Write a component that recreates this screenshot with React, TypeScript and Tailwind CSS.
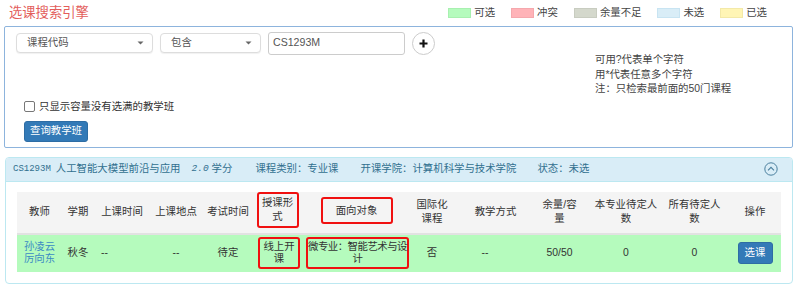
import React from "react";

const legend = [
  { label: "可选", bg: "bg-[#b5fbbd]", bd: "border-[#a8f0b0]" },
  { label: "冲突", bg: "bg-[#ffb3b8]", bd: "border-[#f5a8ad]" },
  { label: "余量不足", bg: "bg-[#d4d8cc]", bd: "border-[#c8ccc0]" },
  { label: "未选", bg: "bg-[#d9edf7]", bd: "border-[#c8e4f2]" },
  { label: "已选", bg: "bg-[#fff5b5]", bd: "border-[#f3e9a8]" },
];

function Caret() {
  return (
    <svg width="7" height="4" viewBox="0 0 7 4" className="shrink-0">
      <path d="M0.5 0.5 L6.5 0.5 L3.5 3.5 Z" fill="#666" />
    </svg>
  );
}

export default function App() {
  return (
    <div className="w-[797px] h-[288px] bg-white text-[#333] text-[10.4px] font-['Liberation_Sans','Noto_Sans_CJK_SC',sans-serif] overflow-hidden">
      {/* title row */}
      <div className="flex items-center justify-between h-[26px] pl-[9px] pr-[30px]">
        <div className="text-[13.3px] text-[#e35d5b] leading-[16px]">选课搜索引擎</div>
        <div className="flex items-center gap-[16px]">
          {legend.map((l) => (
            <div key={l.label} className="flex items-center">
              <span className={`w-[23px] h-[10px] border ${l.bg} ${l.bd}`} />
              <span className="ml-[3px] text-[#444] leading-[12px]">{l.label}</span>
            </div>
          ))}
        </div>
      </div>

      {/* search panel */}
      <div className="ml-[4px] mr-[4px] border border-[#8db4dd] rounded-[2px] pl-[11px] pr-[11px] pt-[5px] pb-[5px]">
        <div className="flex">
          <div className="flex-1 flex items-start">
            <div className="mt-[1px] w-[137px] h-[20px] border border-[#ddd] rounded-[4px] bg-white shadow-[0_1px_1px_rgba(0,0,0,0.06)] flex items-center justify-between pl-[10px] pr-[8px]">
              <span className="text-[#555] leading-[12px]">课程代码</span>
              <Caret />
            </div>
            <div className="ml-[7px] mt-[1px] w-[101px] h-[20px] border border-[#ddd] rounded-[4px] bg-white shadow-[0_1px_1px_rgba(0,0,0,0.06)] flex items-center justify-between pl-[10px] pr-[8px]">
              <span className="text-[#555] leading-[12px]">包含</span>
              <Caret />
            </div>
            <div className="ml-[7px] w-[137px] h-[23px] border border-[#ccc] rounded-[3px] bg-white flex items-center pl-[4px]">
              <span className="text-[#555] text-[10.6px] leading-[12px] -mt-[3px]">CS1293M</span>
            </div>
            <div className="ml-[7px] w-[23px] h-[23px] rounded-full border border-[#ccc] bg-white flex items-center justify-center">
              <svg width="9" height="9" viewBox="0 0 9 9">
                <path d="M4.5 0.5 V8.5 M0.5 4.5 H8.5" stroke="#111" strokeWidth="2.2" />
              </svg>
            </div>
          </div>
          <div className="w-[186px] pt-[21px] leading-[14.5px] text-[#444]">
            <div>可用?代表单个字符</div>
            <div>用*代表任意多个字符</div>
            <div>注：只检索最前面的50门课程</div>
          </div>
        </div>
        <div className="mt-[4px] h-[12px] flex items-center pl-[8px]">
          <span className="w-[11px] h-[11px] border border-[#777] rounded-[2px] bg-white" />
          <span className="ml-[4px] leading-[12px] text-[#333]">只显示容量没有选满的教学班</span>
        </div>
        <div className="mt-[8px] ml-[8px] w-[64px] h-[21px] bg-[#337ab7] border border-[#2e6da4] rounded-[3px] flex items-center justify-center text-white leading-[12px]">
          查询教学班
        </div>
      </div>

      {/* course panel */}
      <div className="mt-[9px] ml-[5px] mr-[4px] border border-[#bce8f1] rounded-[4px]">
        <div className="h-[24px] bg-[#d9edf7] border-b border-[#bce8f1] rounded-t-[3px] flex items-center pl-[7px] pr-[14px] text-[#31708f] leading-[12px]">
          <span className="font-['Liberation_Mono',monospace] text-[9px]">CS1293M</span>
          <span className="ml-[5px]">人工智能大模型前沿与应用</span>
          <span className="ml-[11px] italic font-['Liberation_Mono',monospace] text-[9.5px]">2.0</span>
          <span className="ml-[3px]">学分</span>
          <span className="ml-[23px]">课程类别：专业课</span>
          <span className="ml-[22px]">开课学院：计算机科学与技术学院</span>
          <span className="ml-[21px]">状态：未选</span>
          <span className="ml-auto">
            <svg width="14" height="14" viewBox="0 0 14 14">
              <circle cx="7" cy="7" r="6.2" fill="none" stroke="#4a7f9e" strokeWidth="1" />
              <path d="M4 8.3 L7 5.3 L10 8.3" fill="none" stroke="#4a7f9e" strokeWidth="1.1" />
            </svg>
          </span>
        </div>
        <div className="pl-[11px] pt-[10px] pb-[11px]">
          <table className="table-fixed border-collapse w-[764px]">
            <colgroup>
              <col className="w-[45px]" />
              <col className="w-[32px]" />
              <col className="w-[56px]" />
              <col className="w-[52px]" />
              <col className="w-[52px]" />
              <col className="w-[47px]" />
              <col className="w-[111px]" />
              <col className="w-[40px]" />
              <col className="w-[75px]" />
              <col className="w-[65px]" />
              <col className="w-[68px]" />
              <col className="w-[69px]" />
              <col className="w-[52px]" />
            </colgroup>
            <thead>
              <tr className="bg-[#f4f4f4] h-[42px] leading-[14px] text-[#333]">
                <th className="font-normal border-b-2 border-[#e2e2e2] text-center align-middle">教师</th>
                <th className="font-normal border-b-2 border-[#e2e2e2] text-center align-middle">学期</th>
                <th className="font-normal border-b-2 border-[#e2e2e2] text-center align-middle">上课时间</th>
                <th className="font-normal border-b-2 border-[#e2e2e2] text-center align-middle">上课地点</th>
                <th className="font-normal border-b-2 border-[#e2e2e2] text-center align-middle">考试时间</th>
                <th className="font-normal border-b-2 border-[#e2e2e2] align-middle">
                  <div className="mx-auto w-[42px] border-2 border-[#f01010] rounded-[3px] py-[2px] -mt-[4px] text-center">
                    授课形
                    <br />式
                  </div>
                </th>
                <th className="font-normal border-b-2 border-[#e2e2e2] align-middle">
                  <div className="mx-auto w-[72px] h-[27px] border-2 border-[#f01010] rounded-[3px] flex items-center justify-center -mt-[3px]">
                    面向对象
                  </div>
                </th>
                <th className="font-normal border-b-2 border-[#e2e2e2] text-center align-middle">
                  国际化
                  <br />课程
                </th>
                <th className="font-normal border-b-2 border-[#e2e2e2] text-center align-middle pl-[12px]">教学方式</th>
                <th className="font-normal border-b-2 border-[#e2e2e2] text-center align-middle">
                  余量/容
                  <br />量
                </th>
                <th className="font-normal border-b-2 border-[#e2e2e2] text-center align-middle">
                  本专业待定人
                  <br />数
                </th>
                <th className="font-normal border-b-2 border-[#e2e2e2] text-center align-middle">
                  所有待定人
                  <br />数
                </th>
                <th className="font-normal border-b-2 border-[#e2e2e2] text-center align-middle">操作</th>
              </tr>
            </thead>
            <tbody>
              <tr className="bg-[#b5fbbd] h-[38px] leading-[12px]">
                <td className="text-center align-middle text-[#3b8bc4]">
                  孙凌云
                  <br />厉向东
                </td>
                <td className="text-center align-middle">秋冬</td>
                <td className="text-left align-middle pl-[7px]">--</td>
                <td className="text-center align-middle">--</td>
                <td className="text-center align-middle">待定</td>
                <td className="align-middle">
                  <div className="ml-[4px] w-[42px] h-[32px] border-2 border-[#f01010] rounded-[3px] flex items-center justify-center text-center">
                    线上开
                    <br />课
                  </div>
                </td>
                <td className="align-middle">
                  <div className="ml-[5px] w-[103px] h-[32px] border-2 border-[#f01010] rounded-[3px] flex items-center justify-center text-center whitespace-nowrap tracking-[-0.5px]">
                    微专业：智能艺术与设
                    <br />计
                  </div>
                </td>
                <td className="text-center align-middle">否</td>
                <td className="text-center align-middle pr-[9px]">--</td>
                <td className="text-center align-middle">50/50</td>
                <td className="text-center align-middle">0</td>
                <td className="text-center align-middle">0</td>
                <td className="align-middle">
                  <div className="mx-auto w-[35px] h-[22px] bg-[#337ab7] border border-[#2e6da4] rounded-[3px] flex items-center justify-center text-white">
                    选课
                  </div>
                </td>
              </tr>
            </tbody>
          </table>
        </div>
      </div>
    </div>
  );
}
